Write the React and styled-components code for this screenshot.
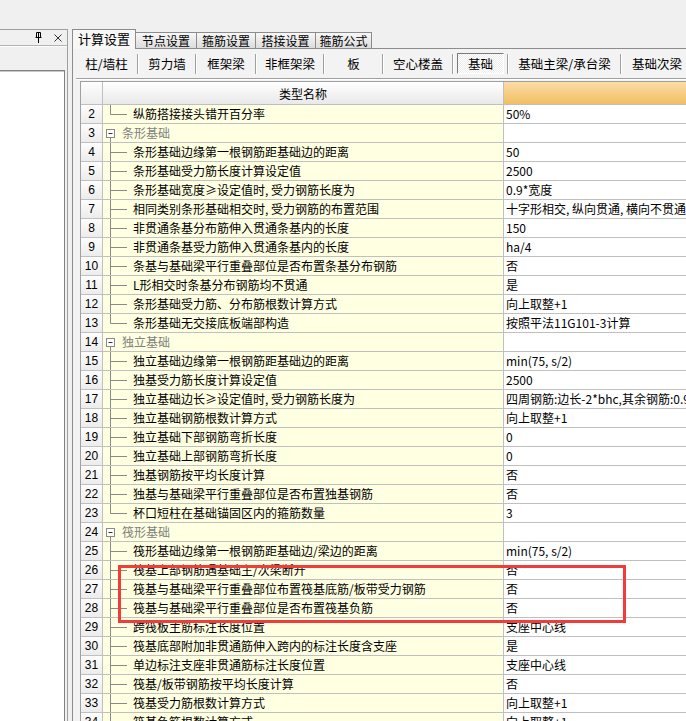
import React from "react";
import styled, { createGlobalStyle } from "styled-components";

const Global = createGlobalStyle`
  html, body { margin: 0; padding: 0; background: #f0f0f0; }
  body {
    font-family: "Noto Sans CJK SC", "Noto Sans", "Liberation Sans", sans-serif;
    font-size: 12px;
    color: #000;
  }
  * { box-sizing: border-box; }
`;

const Page = styled.div`
  position: relative;
  width: 686px;
  height: 721px;
  overflow: hidden;
  background: #f0f0f0;
  display: flex;
  flex-direction: column;
`;

const TopGap = styled.div`
  height: 29px;
  flex: none;
`;

const Main = styled.div`
  flex: 1;
  display: flex;
  min-height: 0;
`;

/* ---------- left docked panel ---------- */
const LeftPanel = styled.div`
  width: 68px;
  flex: none;
  display: flex;
  flex-direction: column;
  border-right: 1px solid #a0a0a0;
`;

const PanelHeader = styled.div`
  height: 17px;
  flex: none;
  border-top: 1px solid #a0a0a0;
  border-bottom: 1px solid #b4b4b4;
  display: flex;
  align-items: center;
  justify-content: flex-end;
  gap: 11px;
  padding-right: 5px;
  background: #f0f0f0;
`;

const PanelStrip = styled.div`
  height: 24px;
  flex: none;
  border-top: 1px solid #fff;
`;

const ListBox = styled.div`
  flex: 1;
  margin-right: 2px;
  background: #fff;
  border-top: 1px solid #828282;
  border-right: 1px solid #828282;
  box-shadow: inset 0 1px 0 #c8c8c8;
`;

/* ---------- right tabbed area ---------- */
const RightArea = styled.div`
  flex: 1;
  margin-left: 4px;
  display: flex;
  flex-direction: column;
  min-width: 0;
`;

const TabStrip = styled.div`
  height: 19px;
  flex: none;
  display: flex;
  align-items: flex-end;
`;

const Tab = styled.div`
  width: ${(p) => p.$w}px;
  flex: none;
  display: flex;
  align-items: center;
  justify-content: center;
  white-space: nowrap;
  line-height: 14px;
  border: 1px solid #8c8c8c;
  border-bottom: none;
  ${(p) =>
    p.$active
      ? `
    height: 20px;
    margin-bottom: -1px;
    position: relative;
    z-index: 1;
    background: #f7f7f7;
    padding-bottom: 2px;
    font-size: 13px;
  `
      : `
    height: 16px;
    margin-left: -1px;
    background: linear-gradient(#f7f7f7, #dcdcdc);
    font-size: 12px;
  `}
`;

const TabPanel = styled.div`
  flex: 1;
  min-height: 0;
  border-top: 1px solid #8c8c8c;
  border-left: 1px solid #8c8c8c;
  padding-left: 3px;
  background: #f3f3f3;
  display: flex;
  flex-direction: column;
`;

const Toolbar = styled.div`
  height: 30px;
  flex: none;
  display: flex;
  align-items: center;
  border-bottom: 1px solid #a0a0a0;
  box-shadow: 0 1px 0 #ffffff;
  white-space: nowrap;
`;

const ToolButton = styled.div`
  width: ${(p) => p.$w}px;
  height: 21px;
  flex: none;
  display: flex;
  align-items: center;
  justify-content: center;
  font-size: 12.5px;
  ${(p) =>
    p.$active &&
    `
    margin: 0 3px;
    border: 1px solid;
    border-color: #7a7a7a #ffffff #ffffff #7a7a7a;
    background-color: #fbfbfb;
    background-image: repeating-conic-gradient(#ececec 0 25%, #ffffff 0 50%);
    background-size: 2px 2px;
  `}
`;

const Sep = styled.div`
  width: 2px;
  height: 20px;
  flex: none;
  border-left: 1px solid #a0a0a0;
  border-right: 1px solid #ffffff;
`;

/* ---------- grid / table ---------- */
const Table = styled.div`
  flex: 1;
  margin-top: 2px;
  margin-left: 4px;
  border-top: 1px solid #a0a0a0;
  border-left: 1px solid #a0a0a0;
  background: #fff;
  overflow: hidden;
`;

const GridRow = styled.div`
  display: grid;
  grid-template-columns: 22px 401px 1fr;
  height: ${(p) => (p.$header ? 23 : 19)}px;
  border-bottom: 1px solid #c0c0c0;
`;

const NumCell = styled.div`
  border-right: 1px solid #c0c0c0;
  background: linear-gradient(#fdfdfd, #ececec);
  display: flex;
  align-items: center;
  justify-content: center;
  font-family: "Liberation Sans", "Noto Sans", sans-serif;
  font-size: 12px;
  line-height: 18px;
`;

const HeadName = styled.div`
  border-right: 1px solid #c0c0c0;
  background: linear-gradient(#ffffff, #e9e9e9);
  display: flex;
  align-items: center;
  justify-content: center;
  font-size: 12px;
`;

const HeadValue = styled.div`
  background: linear-gradient(#fbdca6, #f1bf62);
`;

const NameCell = styled.div`
  border-right: 1px solid #c0c0c0;
  background: #ffffe1;
  display: flex;
  align-items: center;
  white-space: nowrap;
  overflow: hidden;
  line-height: 18px;
  color: ${(p) => (p.$group ? "#808080" : "#000")};
`;

const ValueCell = styled.div`
  background: #fff;
  padding-left: 2px;
  display: flex;
  align-items: center;
  white-space: nowrap;
  overflow: hidden;
  line-height: 18px;
`;

const Label = styled.span`
  margin-left: ${(p) => p.$gap}px;
`;

const Highlight = styled.div`
  position: absolute;
  left: 118px;
  top: 565px;
  width: 508px;
  height: 58px;
  border: 3px solid #f23b3b;
  pointer-events: none;
`;

/* ---------- icons ---------- */
const PinIcon = () => (
  <svg width="9" height="11" viewBox="0 0 9 11">
    <path d="M2.5 0.5h4v5h-4z M1.5 5.5h6" fill="none" stroke="#000" strokeWidth="1" />
    <path d="M4.5 1v4.5" stroke="#000" strokeWidth="1" />
    <path d="M4.5 6v5" stroke="#000" strokeWidth="1" />
  </svg>
);

const CloseIcon = () => (
  <svg width="8" height="8" viewBox="0 0 8 8">
    <path d="M0.5 0.5l7 7M7.5 0.5l-7 7" stroke="#333" strokeWidth="1" />
  </svg>
);

const TreeChild = ({ last }) => (
  <svg width="27" height="18" viewBox="0 0 27 18" style={{ flex: "none" }}>
    <path d={`M7.5 0V${last ? 9.5 : 18}M7.5 9.5H24`} stroke="#8a8a8a" strokeWidth="1" fill="none" />
  </svg>
);

const TreeGroup = () => (
  <svg width="16" height="18" viewBox="0 0 16 18" style={{ flex: "none" }}>
    <rect x="3.5" y="5.5" width="8" height="8" fill="#fff" stroke="#8a8a8a" />
    <path d="M5.5 9.5h4" stroke="#333" strokeWidth="1" />
    <path d="M7.5 14V18" stroke="#8a8a8a" strokeWidth="1" />
  </svg>
);

/* ---------- data ---------- */
const tabs = [
  { t: "计算设置", w: 64, active: true },
  { t: "节点设置", w: 62 },
  { t: "箍筋设置", w: 60 },
  { t: "搭接设置", w: 61 },
  { t: "箍筋公式", w: 57 },
];

const tools = [
  { t: "柱/墙柱", w: 61 },
  { t: "剪力墙", w: 56 },
  { t: "框架梁", w: 58 },
  { t: "非框架梁", w: 66 },
  { t: "板", w: 57 },
  { t: "空心楼盖", w: 68 },
  { t: "基础", w: 47, active: true },
  { t: "基础主梁/承台梁", w: 111 },
  { t: "基础次梁", w: 70 },
];

const rows = [
  { n: 2, name: "纵筋搭接接头错开百分率", v: "50%", last: true },
  { n: 3, name: "条形基础", group: true },
  { n: 4, name: "条形基础边缘第一根钢筋距基础边的距离", v: "50" },
  { n: 5, name: "条形基础受力筋长度计算设定值", v: "2500" },
  { n: 6, name: "条形基础宽度≥设定值时, 受力钢筋长度为", v: "0.9*宽度" },
  { n: 7, name: "相同类别条形基础相交时, 受力钢筋的布置范围", v: "十字形相交, 纵向贯通, 横向不贯通" },
  { n: 8, name: "非贯通条基分布筋伸入贯通条基内的长度", v: "150" },
  { n: 9, name: "非贯通条基受力筋伸入贯通条基内的长度", v: "ha/4" },
  { n: 10, name: "条基与基础梁平行重叠部位是否布置条基分布钢筋", v: "否" },
  { n: 11, name: "L形相交时条基分布钢筋均不贯通", v: "是" },
  { n: 12, name: "条形基础受力筋、分布筋根数计算方式", v: "向上取整+1" },
  { n: 13, name: "条形基础无交接底板端部构造", v: "按照平法11G101-3计算", last: true },
  { n: 14, name: "独立基础", group: true },
  { n: 15, name: "独立基础边缘第一根钢筋距基础边的距离", v: "min(75, s/2)" },
  { n: 16, name: "独基受力筋长度计算设定值", v: "2500" },
  { n: 17, name: "独立基础边长≥设定值时, 受力钢筋长度为", v: "四周钢筋:边长-2*bhc,其余钢筋:0.9*边长" },
  { n: 18, name: "独立基础钢筋根数计算方式", v: "向上取整+1" },
  { n: 19, name: "独立基础下部钢筋弯折长度", v: "0" },
  { n: 20, name: "独立基础上部钢筋弯折长度", v: "0" },
  { n: 21, name: "独基钢筋按平均长度计算", v: "否" },
  { n: 22, name: "独基与基础梁平行重叠部位是否布置独基钢筋", v: "否" },
  { n: 23, name: "杯口短柱在基础锚固区内的箍筋数量", v: "3", last: true },
  { n: 24, name: "筏形基础", group: true },
  { n: 25, name: "筏形基础边缘第一根钢筋距基础边/梁边的距离", v: "min(75, s/2)" },
  { n: 26, name: "筏基上部钢筋遇基础主/次梁断开", v: "否" },
  { n: 27, name: "筏基与基础梁平行重叠部位布置筏基底筋/板带受力钢筋", v: "否" },
  { n: 28, name: "筏基与基础梁平行重叠部位是否布置筏基负筋", v: "否" },
  { n: 29, name: "跨筏板主筋标注长度位置", v: "支座中心线" },
  { n: 30, name: "筏基底部附加非贯通筋伸入跨内的标注长度含支座", v: "是" },
  { n: 31, name: "单边标注支座非贯通筋标注长度位置", v: "支座中心线" },
  { n: 32, name: "筏基/板带钢筋按平均长度计算", v: "否" },
  { n: 33, name: "筏基受力筋根数计算方式", v: "向上取整+1" },
  { n: 34, name: "筏基负筋根数计算方式", v: "向上取整+1" },
  { n: 35, name: "筏基分布筋根数计算方式", v: "向上取整+1" },
];

export default function App() {
  return (
    <>
      <Global />
      <Page>
        <TopGap />
        <Main>
          <LeftPanel>
            <PanelHeader>
              <PinIcon />
              <CloseIcon />
            </PanelHeader>
            <PanelStrip />
            <ListBox />
          </LeftPanel>

          <RightArea>
            <TabStrip>
              {tabs.map((t) => (
                <Tab key={t.t} $w={t.w} $active={t.active}>
                  {t.t}
                </Tab>
              ))}
            </TabStrip>
            <TabPanel>
              <Toolbar>
                {tools.map((b, i) => (
                  <React.Fragment key={b.t}>
                    {i > 0 && <Sep />}
                    <ToolButton $w={b.w} $active={b.active}>
                      {b.t}
                    </ToolButton>
                  </React.Fragment>
                ))}
              </Toolbar>
              <Table>
                <GridRow $header>
                  <NumCell />
                  <HeadName>类型名称</HeadName>
                  <HeadValue />
                </GridRow>
                {rows.map((r) => (
                  <GridRow key={r.n}>
                    <NumCell>{r.n}</NumCell>
                    <NameCell $group={r.group}>
                      {r.group ? <TreeGroup /> : <TreeChild last={r.last} />}
                      <Label $gap={r.group ? 3 : 3}>{r.name}</Label>
                    </NameCell>
                    <ValueCell>{r.v || ""}</ValueCell>
                  </GridRow>
                ))}
              </Table>
            </TabPanel>
          </RightArea>
        </Main>
        <Highlight />
      </Page>
    </>
  );
}
